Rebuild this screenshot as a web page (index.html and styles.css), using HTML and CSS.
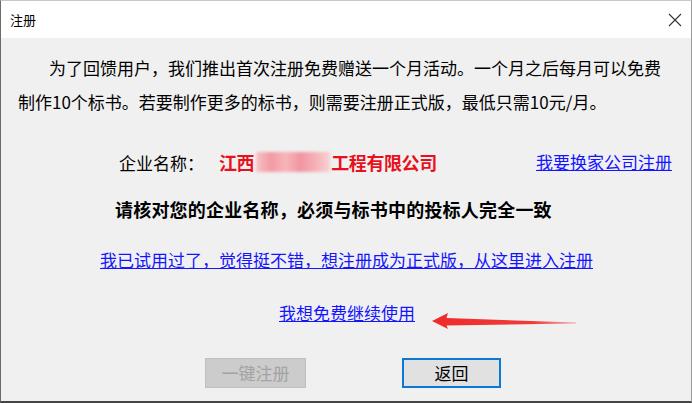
FILE: index.html
```html
<!DOCTYPE html>
<html lang="zh-CN">
<head>
<meta charset="utf-8">
<title>注册</title>
<link rel="stylesheet" href="styles.css">
</head>
<body>
<div class="window">
  <div class="titlebar">
    <span class="title">注册</span>
    <svg class="close" width="14" height="14" viewBox="0 0 14 14"><path d="M1 1L13 13M13 1L1 13" stroke="#333" stroke-width="1.1" fill="none"/></svg>
  </div>
  <div class="content">
    <p class="intro">为了回馈用户，我们推出首次注册免费赠送一个月活动。一个月之后每月可以免费<br>制作10个标书。若要制作更多的标书，则需要注册正式版，最低只需10元/月。</p>
    <div class="company-row">
      <span class="label">企业名称：</span>
      <span class="company">江西<span class="blur"></span>工程有限公司</span>
      <a class="link change" href="#">我要换家公司注册</a>
    </div>
    <p class="notice">请核对您的企业名称，必须与标书中的投标人完全一致</p>
    <div class="link-row first"><a class="link" href="#">我已试用过了，觉得挺不错，想注册成为正式版，从这里进入注册</a></div>
    <div class="link-row second"><a class="link" href="#">我想免费继续使用</a></div>
    <div class="buttons">
      <button class="btn disabled" disabled>一键注册</button>
      <button class="btn primary">返回</button>
    </div>
    <svg class="arrow" width="150" height="22" viewBox="0 0 150 22">
      <defs>
        <linearGradient id="fade" x1="0" y1="0" x2="1" y2="0">
          <stop offset="0" stop-color="#ef2b2b"/>
          <stop offset="0.7" stop-color="#f03a3a"/>
          <stop offset="1" stop-color="#f06060" stop-opacity="0.5"/>
        </linearGradient>
      </defs>
      <path d="M3 11 L19 3 L17.5 8 L147 12.5 L147 13.6 L17.5 15.5 L19 19 Z" fill="url(#fade)"/>
    </svg>
  </div>
</div>
</body>
</html>
```
FILE: styles.css
```css
* { box-sizing: border-box; }
html, body { margin: 0; padding: 0; background: #ffffff; }
body {
  font-family: "Noto Sans CJK SC", "Noto Sans", "Liberation Sans", sans-serif;
  color: #000;
}
.window {
  width: 692px;
  height: 403px;
  border-left: 1px solid #6b6b6b;
  border-right: 1px solid #9a9a9a;
  border-top: 1px solid #c8c8c8;
  border-bottom: 2px solid #454545;
  display: flex;
  flex-direction: column;
  overflow: hidden;
}
.titlebar {
  height: 37px;
  background: #ffffff;
  display: flex;
  align-items: center;
  justify-content: space-between;
  padding: 0 9px 0 9px;
  flex: none;
}
.title { font-size: 13px; line-height: 16px; }
.close { display: block; margin-right: 0; }
.content {
  position: relative;
  flex: 1;
  background: #f0f0f0;
}
.intro {
  margin: 13px 0 0 0;
  padding-left: 17px;
  font-size: 17px;
  line-height: 34px;
  text-indent: 31px;
  white-space: nowrap;
}
.company-row {
  display: flex;
  align-items: center;
  margin-top: 28px;
  padding-left: 118px;
  padding-right: 19px;
  height: 30px;
  font-size: 17px;
}
.label { width: 100px; }
.company {
  color: #e8101c;
  font-weight: bold;
  font-size: 18px;
  display: flex;
  align-items: center;
  letter-spacing: -0.4px;
}
.blur {
  display: inline-block;
  width: 74px;
  height: 20px;
  margin: 0 1px 0 2px;
  background: linear-gradient(90deg, #f8c2c6 0%, #f29aa3 20%, #f7b5ba 40%, #f095a0 60%, #f6b0b6 80%, #f9d2d5 100%);
  filter: blur(1.5px);
}
.link {
  color: #1414ff;
  text-decoration: underline;
  font-size: 17px;
  line-height: 30px;
}
.change { margin-left: auto; }
.notice {
  margin: 17px 0 0 0;
  padding-left: 114px;
  font-size: 18px;
  font-weight: bold;
  line-height: 30px;
  letter-spacing: 0.2px;
}
.link-row { height: 30px; line-height: 30px; }
.link-row.first { margin-top: 21px; padding-left: 99px; }
.link-row.second { margin-top: 23px; padding-left: 278px; }
.buttons {
  display: flex;
  margin-top: 30px;
  padding-left: 204px;
}
.btn {
  font-family: inherit;
  font-size: 17px;
  height: 30px;
  padding: 0;
  line-height: 26px;
}
.btn.disabled {
  width: 101px;
  background: #cccccc;
  border: 1px solid #bfbfbf;
  color: #a3a3a3;
}
.btn.primary {
  width: 99px;
  margin-left: 96px;
  background: #e1e1e1;
  border: 2px solid #0a78d7;
  color: #000;
}
.arrow {
  position: absolute;
  left: 428px;
  top: 272px;
}
```
